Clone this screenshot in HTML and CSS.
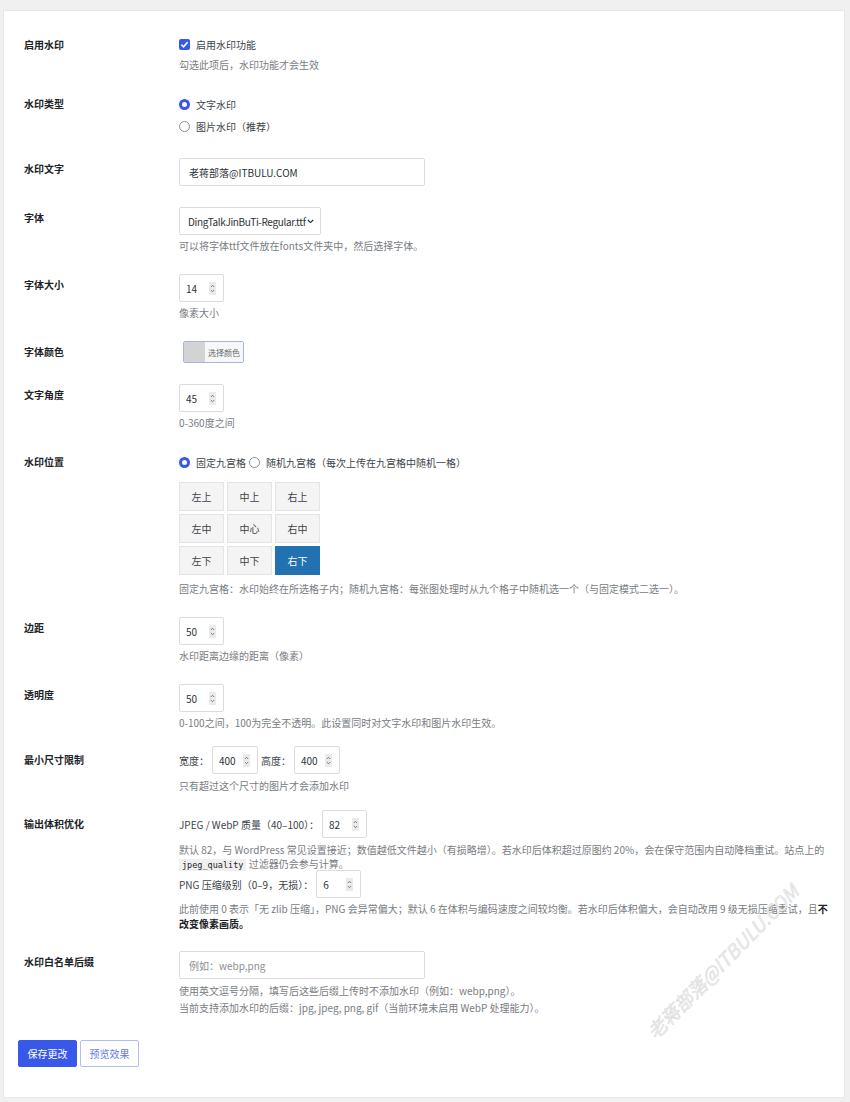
FILE: index.html
```html
<!DOCTYPE html>
<html lang="zh-CN">
<head>
<meta charset="utf-8">
<title>水印设置</title>
<link rel="stylesheet" href="styles.css">
</head>
<body>
<div class="page">
  <div class="card">
    <div class="row">
      <div class="label">启用水印</div>
      <div class="field">
        <div class="line line-20"><span class="checkbox"><svg width="11" height="11" viewBox="0 0 11 11"><path d="M2.4 5.7 L4.5 7.8 L8.7 3.1" fill="none" stroke="#fff" stroke-width="1.6"/></svg></span>启用水印功能</div>
        <p class="desc">勾选此项后，水印功能才会生效</p>
      </div>
    </div>

    <div class="row">
      <div class="label">水印类型</div>
      <div class="field">
        <div class="line line-22"><span class="radio on"></span>文字水印</div>
        <div class="line line-22"><span class="radio"></span>图片水印（推荐）</div>
      </div>
    </div>

    <div class="row">
      <div class="label">水印文字</div>
      <div class="field">
        <div class="text-input">老蒋部落@ITBULU.COM</div>
      </div>
    </div>

    <div class="row">
      <div class="label">字体</div>
      <div class="field">
        <div class="select"><span class="select-text">DingTalkJinBuTi-Regular.ttf</span><svg class="chev" width="7" height="5" viewBox="0 0 7 5"><path d="M0.8 1 L3.5 3.6 L6.2 1" fill="none" stroke="#1d2327" stroke-width="1.1"/></svg></div>
        <p class="desc">可以将字体ttf文件放在fonts文件夹中，然后选择字体。</p>
      </div>
    </div>

    <div class="row">
      <div class="label">字体大小</div>
      <div class="field">
        <div class="num"><span class="num-val">14</span><svg class="spin" width="7" height="13" viewBox="0 0 7 13"><rect width="7" height="13" fill="#ebebeb"/><path d="M1.8 5 L3.5 3.3 L5.2 5 M1.8 8 L3.5 9.7 L5.2 8" fill="none" stroke="#646970" stroke-width="0.9"/></svg></div>
        <p class="desc">像素大小</p>
      </div>
    </div>

    <div class="row">
      <div class="label">字体颜色</div>
      <div class="field">
        <div class="color-btn"><span class="swatch"></span><span class="color-text">选择颜色</span></div>
      </div>
    </div>

    <div class="row">
      <div class="label">文字角度</div>
      <div class="field">
        <div class="num"><span class="num-val">45</span><svg class="spin" width="7" height="13" viewBox="0 0 7 13"><rect width="7" height="13" fill="#ebebeb"/><path d="M1.8 5 L3.5 3.3 L5.2 5 M1.8 8 L3.5 9.7 L5.2 8" fill="none" stroke="#646970" stroke-width="0.9"/></svg></div>
        <p class="desc">0-360度之间</p>
      </div>
    </div>

    <div class="row">
      <div class="label">水印位置</div>
      <div class="field">
        <div class="line line-22"><span class="radio on"></span>固定九宫格<span class="radio gap"></span>随机九宫格（每次上传在九宫格中随机一格）</div>
        <div class="grid">
          <div class="cell">左上</div><div class="cell">中上</div><div class="cell">右上</div>
          <div class="cell">左中</div><div class="cell">中心</div><div class="cell">右中</div>
          <div class="cell">左下</div><div class="cell">中下</div><div class="cell active">右下</div>
        </div>
        <p class="desc desc-grid">固定九宫格：水印始终在所选格子内；随机九宫格：每张图处理时从九个格子中随机选一个（与固定模式二选一）。</p>
      </div>
    </div>

    <div class="row">
      <div class="label">边距</div>
      <div class="field">
        <div class="num"><span class="num-val">50</span><svg class="spin" width="7" height="13" viewBox="0 0 7 13"><rect width="7" height="13" fill="#ebebeb"/><path d="M1.8 5 L3.5 3.3 L5.2 5 M1.8 8 L3.5 9.7 L5.2 8" fill="none" stroke="#646970" stroke-width="0.9"/></svg></div>
        <p class="desc">水印距离边缘的距离（像素）</p>
      </div>
    </div>

    <div class="row">
      <div class="label">透明度</div>
      <div class="field">
        <div class="num"><span class="num-val">50</span><svg class="spin" width="7" height="13" viewBox="0 0 7 13"><rect width="7" height="13" fill="#ebebeb"/><path d="M1.8 5 L3.5 3.3 L5.2 5 M1.8 8 L3.5 9.7 L5.2 8" fill="none" stroke="#646970" stroke-width="0.9"/></svg></div>
        <p class="desc">0-100之间，100为完全不透明。此设置同时对文字水印和图片水印生效。</p>
      </div>
    </div>

    <div class="row row-size">
      <div class="label label-mid">最小尺寸限制</div>
      <div class="field">
        <div class="inline-line">
          <span>宽度：</span>
          <div class="num num-46"><span class="num-val">400</span><svg class="spin" width="7" height="13" viewBox="0 0 7 13"><rect width="7" height="13" fill="#ebebeb"/><path d="M1.8 5 L3.5 3.3 L5.2 5 M1.8 8 L3.5 9.7 L5.2 8" fill="none" stroke="#646970" stroke-width="0.9"/></svg></div>
          <span>高度：</span>
          <div class="num num-46"><span class="num-val">400</span><svg class="spin" width="7" height="13" viewBox="0 0 7 13"><rect width="7" height="13" fill="#ebebeb"/><path d="M1.8 5 L3.5 3.3 L5.2 5 M1.8 8 L3.5 9.7 L5.2 8" fill="none" stroke="#646970" stroke-width="0.9"/></svg></div>
        </div>
        <p class="desc desc-5">只有超过这个尺寸的图片才会添加水印</p>
      </div>
    </div>

    <div class="row row-opt">
      <div class="label label-mid">输出体积优化</div>
      <div class="field">
        <div class="inline-line">
          <span class="opt-text">JPEG / WebP 质量（40–100）：</span>
          <div class="num"><span class="num-val">82</span><svg class="spin" width="7" height="13" viewBox="0 0 7 13"><rect width="7" height="13" fill="#ebebeb"/><path d="M1.8 5 L3.5 3.3 L5.2 5 M1.8 8 L3.5 9.7 L5.2 8" fill="none" stroke="#646970" stroke-width="0.9"/></svg></div>
        </div>
        <p class="desc desc-5">默认 82，与 WordPress 常见设置接近；数值越低文件越小（有损略增）。若水印后体积超过原图约 20%，会在保守范围内自动降档重试。站点上的<br><code>jpeg_quality</code> 过滤器仍会参与计算。</p>
        <div class="inline-line png-line">
          <span class="opt-text">PNG 压缩级别（0–9，无损）：</span>
          <div class="num"><span class="num-val">6</span><svg class="spin" width="7" height="13" viewBox="0 0 7 13"><rect width="7" height="13" fill="#ebebeb"/><path d="M1.8 5 L3.5 3.3 L5.2 5 M1.8 8 L3.5 9.7 L5.2 8" fill="none" stroke="#646970" stroke-width="0.9"/></svg></div>
        </div>
        <p class="desc desc-png">此前使用 0 表示「无 zlib 压缩」，PNG 会异常偏大；默认 6 在体积与编码速度之间较均衡。若水印后体积偏大，会自动改用 9 级无损压缩重试，且<strong>不<br>改变像素画质。</strong></p>
      </div>
    </div>

    <div class="row row-white">
      <div class="label">水印白名单后缀</div>
      <div class="field">
        <div class="text-input placeholder">例如：webp,png</div>
        <p class="desc desc-5">使用英文逗号分隔，填写后这些后缀上传时不添加水印（例如：webp,png）。</p>
        <p class="desc desc-3">当前支持添加水印的后缀：jpg, jpeg, png, gif（当前环境未启用 WebP 处理能力）。</p>
      </div>
    </div>

    <div class="actions">
      <span class="btn btn-primary">保存更改</span>
      <span class="btn btn-secondary">预览效果</span>
    </div>

    <div class="wm">老蒋部落@ITBULU.COM</div>
  </div>
</div>
</body>
</html>
```

FILE: styles.css
```css
* { box-sizing: border-box; }

html, body {
  margin: 0;
  padding: 0;
}

body {
  background: #f0f0f1;
  font-family: "Noto Sans CJK SC", "Noto Sans", sans-serif;
  font-size: 10px;
  color: #3c434a;
}

.page {
  padding: 10px 5px 5px 3px;
}

.card {
  position: relative;
  background: #fff;
  border: 1px solid #e6e6e6;
  padding: 13px 4px 30px 14px;
  overflow: hidden;
}

.row {
  display: flex;
  align-items: flex-start;
  padding: 10px 0 11px 6px;
}

.label {
  width: 155px;
  flex: none;
  font-weight: 700;
  color: #1d2327;
  line-height: 14px;
  padding-top: 4px;
}

.label-mid {
  padding-top: 7px;
}

.field {
  flex: 1;
  min-width: 0;
}

.line {
  display: flex;
  align-items: center;
  color: #3c434a;
}

.line-20 { height: 20px; }
.line-22 { height: 22px; }

.checkbox {
  width: 11px;
  height: 11px;
  border-radius: 2px;
  background: #3858e9;
  margin-right: 6px;
  display: flex;
}

.radio {
  width: 11px;
  height: 11px;
  border-radius: 50%;
  border: 1px solid #8c8f94;
  background: #fff;
  margin-right: 6px;
  flex: none;
}

.radio.on {
  border: 3.5px solid #3858e9;
}

.radio.gap {
  margin-left: 3px;
}

.desc {
  margin: 4px 0 0;
  line-height: 14px;
  color: #787c82;
}

.desc-5 { margin-top: 5px; }
.desc-3 { margin-top: 3px; }
.desc-grid { margin-top: 7px; }

.desc-png {
  margin-top: 3px;
  line-height: 15px;
}

.desc strong {
  color: #1d2327;
  font-weight: 700;
}

code {
  font-family: "DejaVu Sans Mono", "Liberation Mono", monospace;
  font-size: 8.5px;
  background: #f0f0f1;
  color: #1d2327;
  padding: 1px 3px;
}

.text-input {
  width: 246px;
  height: 28px;
  border: 1px solid #dcdcde;
  border-radius: 2px;
  padding: 0 9px;
  display: flex;
  align-items: center;
  color: #2c3338;
}

.text-input.placeholder {
  color: #8c8f94;
}

.select {
  width: 142px;
  height: 28px;
  border: 1px solid #dcdcde;
  border-radius: 2px;
  padding: 0 6px 0 8px;
  display: flex;
  align-items: center;
  justify-content: space-between;
  color: #2c3338;
  white-space: nowrap;
}

.select-text {
  letter-spacing: -0.35px;
}

.chev {
  flex: none;
}

.num {
  width: 45px;
  height: 28px;
  border: 1px solid #dcdcde;
  border-radius: 2px;
  display: flex;
  align-items: center;
  padding: 0 0 0 6px;
  color: #2c3338;
  flex: none;
}

.num-46 { width: 46px; }

.num-val {
  flex: 1;
}

.spin {
  margin-right: 7px;
  flex: none;
}

.color-btn {
  margin-left: 4px;
  width: 61px;
  height: 22px;
  border: 1px solid #a9b0ee;
  border-radius: 2px;
  display: flex;
  overflow: hidden;
}

.swatch {
  width: 21px;
  background: #d3d3d3;
}

.color-text {
  flex: 1;
  background: #f6f7f7;
  font-size: 8px;
  color: #646970;
  display: flex;
  align-items: center;
  justify-content: center;
}

.grid {
  margin-top: 9px;
  display: grid;
  grid-template-columns: repeat(3, 45px);
  grid-auto-rows: 29px;
  gap: 3px;
}

.cell {
  background: #f4f4f4;
  border: 1px solid #e4e4e4;
  display: flex;
  align-items: center;
  justify-content: center;
  color: #3c434a;
}

.cell.active {
  background: #2271b1;
  border-color: #2271b1;
  color: #fff;
}

.inline-line {
  display: flex;
  align-items: center;
  height: 28px;
  gap: 3px;
  color: #3c434a;
}

.row-size {
  padding-top: 5px;
}

.row-opt {
  padding-top: 6px;
}

.png-line {
  margin-top: -2px;
}

.row-white {
  padding-top: 9px;
}

.actions {
  display: flex;
  gap: 3px;
  margin-top: 14px;
}

.btn {
  width: 59px;
  height: 27px;
  border-radius: 2px;
  display: flex;
  align-items: center;
  justify-content: center;
}

.btn-primary {
  background: #3858e9;
  border: 1px solid #3858e9;
  color: #fff;
}

.btn-secondary {
  background: #fff;
  border: 1px solid #b3bdf4;
  color: #6678e8;
}

.wm {
  position: absolute;
  left: 718px;
  top: 950px;
  transform: translate(-50%, -50%) rotate(-45.5deg);
  white-space: nowrap;
  font-size: 19px;
  font-style: italic;
  color: #eeeeee;
  -webkit-text-stroke: 0.4px #d4d4d4;
  pointer-events: none;
}
```
